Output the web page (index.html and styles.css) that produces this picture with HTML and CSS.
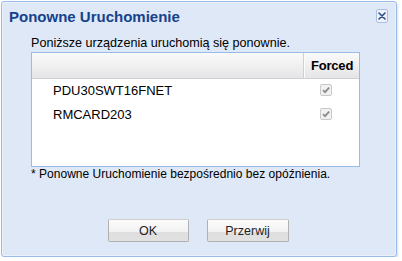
FILE: index.html
```html
<!DOCTYPE html>
<html lang="pl">
<head>
<meta charset="utf-8">
<title>Ponowne Uruchomienie</title>
<link rel="stylesheet" href="styles.css">
</head>
<body>
<div class="dialog">
  <div class="dialog-header">
    <span class="dialog-title">Ponowne Uruchomienie</span>
    <span class="close-btn">
      <svg width="12" height="14" viewBox="0 0 12 14">
        <rect x="0.5" y="0.5" width="11" height="13" rx="1.5" fill="#eef3fb" stroke="#a9c0e2"/>
        <path d="M3 4 L9 10 M9 4 L3 10" stroke="#2f4f86" stroke-width="1.6" stroke-linecap="round"/>
      </svg>
    </span>
  </div>
  <div class="dialog-body">
    <p class="intro">Poniższe urządzenia uruchomią się ponownie.</p>
    <div class="grid">
      <div class="grid-head">
        <div class="col-name"></div>
        <div class="col-forced head-forced">Forced</div>
      </div>
      <div class="grid-row">
        <div class="col-name cell-name">PDU30SWT16FNET</div>
        <div class="col-forced cell-check">
          <svg width="12" height="12" viewBox="0 0 12 12"><rect x="0.5" y="0.5" width="11" height="11" rx="1.5" fill="#f1f1f1" stroke="#c8c8c8"/><path d="M3 6.2 L5 8.2 L9.2 3.6" fill="none" stroke="#8a8a8a" stroke-width="1.8"/></svg>
        </div>
      </div>
      <div class="grid-row">
        <div class="col-name cell-name">RMCARD203</div>
        <div class="col-forced cell-check">
          <svg width="12" height="12" viewBox="0 0 12 12"><rect x="0.5" y="0.5" width="11" height="11" rx="1.5" fill="#f1f1f1" stroke="#c8c8c8"/><path d="M3 6.2 L5 8.2 L9.2 3.6" fill="none" stroke="#8a8a8a" stroke-width="1.8"/></svg>
        </div>
      </div>
    </div>
    <p class="note">* Ponowne Uruchomienie bezpośrednio bez opóźnienia.</p>
  </div>
  <div class="dialog-buttons">
    <button class="btn btn-ok">OK</button>
    <button class="btn btn-cancel">Przerwij</button>
  </div>
</div>
</body>
</html>
```

FILE: styles.css
```css
html, body {
  margin: 0;
  padding: 0;
  background: #ffffff;
}

body {
  font-family: "Liberation Sans", Arial, sans-serif;
  font-size: 13px;
  color: #000;
}

.dialog {
  box-sizing: border-box;
  margin: 1px 0 0 1px;
  width: 396px;
  height: 256px;
  border: 1px solid #99bbe8;
  border-radius: 3px;
  background: #dfe8f6;
  box-shadow: inset 0 0 0 1px #edf2fa, 1px 2px 2px rgba(0, 0, 0, 0.12);
  display: flex;
  flex-direction: column;
}

.dialog-header {
  display: flex;
  justify-content: space-between;
  align-items: flex-start;
  padding: 6px 8px 0 7px;
  height: 20px;
}

.dialog-title {
  font-weight: bold;
  font-size: 15px;
  line-height: 18px;
  color: #15428b;
}

.close-btn {
  display: flex;
  margin-top: 1px;
}

.dialog-body {
  padding: 8px 36px 0 29px;
}

.intro {
  margin: 0 0 1px 0;
  line-height: 15px;
  height: 15px;
  font-size: 12.6px;
}

.grid {
  box-sizing: border-box;
  height: 115px;
  border: 1px solid #99bbe8;
  background: #ffffff;
}

.grid-head {
  display: flex;
  height: 25px;
  border-bottom: 1px solid #d0d0d0;
  background: linear-gradient(#fafafa, #eeeeee 60%, #e4e5e7);
}

.col-name {
  width: 271px;
}

.col-forced {
  flex: 1;
}

.head-forced {
  border-left: 1px solid #d0d0d0;
  box-shadow: inset 1px 0 0 #fdfdfd;
  font-weight: bold;
  line-height: 25px;
  padding-left: 7px;
  letter-spacing: -0.2px;
}

.grid-row {
  display: flex;
  height: 24px;
  line-height: 23px;
}

.cell-name {
  padding-left: 21px;
  width: 251px;
}

.cell-check {
  display: flex;
  align-items: center;
  padding-left: 16px;
  padding-bottom: 3px;
  box-sizing: border-box;
}

.note {
  margin: 0;
  line-height: 15px;
  font-size: 12px;
  letter-spacing: 0.02px;
}

.dialog-buttons {
  margin-top: auto;
  padding: 0 0 14px 0;
  display: flex;
  justify-content: center;
  gap: 18px;
  padding-right: 2px;
}

.btn {
  box-sizing: border-box;
  height: 23px;
  font-family: "Liberation Sans", Arial, sans-serif;
  font-size: 12.5px;
  color: #222;
  border: 1px solid #b0b0b0;
  border-top-color: #cfcfcf;
  border-radius: 2px;
  background: linear-gradient(#fcfcfc, #f2f2f2 55%, #dedede 60%, #e2e2e2);
  padding: 0;
  line-height: 20px;
}

.btn-ok {
  width: 81px;
}

.btn-cancel {
  width: 82px;
}
```
